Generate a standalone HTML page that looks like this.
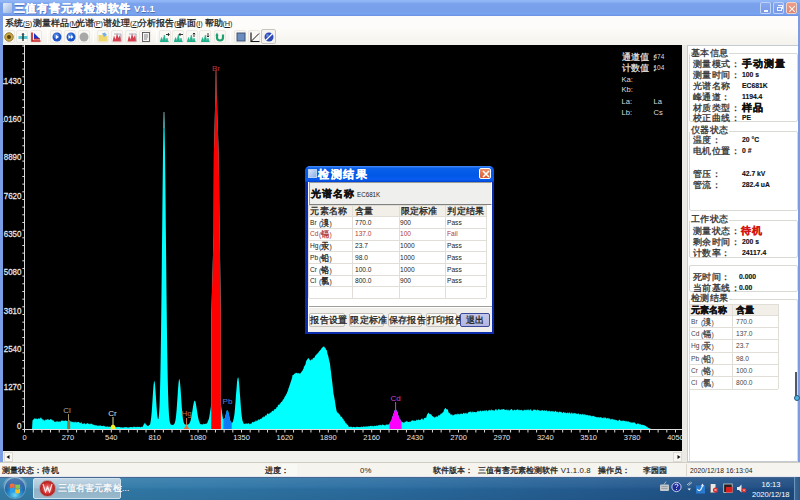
<!DOCTYPE html>
<html><head><meta charset="utf-8">
<style>
*{margin:0;padding:0;box-sizing:border-box}
html,body{width:800px;height:500px;overflow:hidden;background:#7b9de6;font-family:"Liberation Sans",sans-serif;}
.abs{position:absolute}
.nw{white-space:nowrap}
#title{left:0;top:0;width:800px;height:15.5px;background:linear-gradient(#92b8f6 0,#8cb2f4 12%,#7ba2ec 22%,#78a0ea 60%,#78a4f0 88%,#6c90de 100%);}
#title .t{position:absolute;left:13.5px;top:1.5px;color:#fff;font-weight:bold;font-size:11px;letter-spacing:0.75px;white-space:nowrap;line-height:12px;text-shadow:0.5px 0.5px 0.5px rgba(40,60,120,0.5)}
.tb{position:absolute;top:2.2px;width:10.8px;height:11.7px;border:1px solid rgba(214,228,252,0.75);border-radius:2px;background:linear-gradient(#88a8ee,#7898e6)}
#menu{left:2.5px;top:15.5px;width:795.5px;height:12.5px;background:#fdfcfa}
#menu>span{position:absolute;top:2.5px;font-size:8.5px;line-height:10px;color:#222;white-space:nowrap}
#menu i{font-style:normal;font-size:7.4px;color:#222;letter-spacing:-0.2px}
#tool{left:2.5px;top:28px;width:795.5px;height:17px;background:linear-gradient(#fdfcf9,#f4f2ec)}
.ib{position:absolute;top:2px;width:12px;height:12.5px;border:1px solid #ebe9e2;border-radius:2px;background:#f9f8f4}
.ib svg{position:absolute;left:0.5px;top:0.7px}
.sep{position:absolute;top:2px;width:1px;height:13px;background:#d8d5ca;border-right:1px solid #fff}
#chartbg{left:3px;top:45px;width:679px;height:406px;background:#000}
#hscroll{left:3px;top:451px;width:679px;height:11px;background:#f1f1ee}
#split{left:682px;top:45px;width:5px;height:417px;background:#eceae4}
#panel{left:686.5px;top:44.5px;width:111.5px;height:417px;background:#fff;border:1px solid #c6cbd2;border-right:none}
.grp{position:absolute;border:1px solid #d8dad6;border-radius:2px}
.gl{position:absolute;font-size:8.5px;line-height:10px;color:#333;background:#fff;padding:0 1px;white-space:nowrap;letter-spacing:0.3px}
.row{position:absolute;font-size:8.5px;line-height:10px;color:#333;white-space:nowrap;letter-spacing:0.45px}
.val{position:absolute;font-size:7.9px;line-height:10px;color:#111;font-weight:bold;white-space:nowrap;transform:scaleX(.86);transform-origin:0 0;-webkit-text-stroke-width:0.15px}
.valc{position:absolute;font-size:9.5px;line-height:10px;color:#111;font-weight:bold;white-space:nowrap;letter-spacing:1px}
#status{left:0;top:462px;width:800px;height:14px;background:#f6f4ee;border-top:1px solid #cfcdc3}
#status>span{position:absolute;top:2.5px;font-size:7.8px;line-height:9px;color:#222;white-space:nowrap;letter-spacing:0.1px}
#task{left:0;top:476px;width:800px;height:24px;background:linear-gradient(rgba(255,255,255,0.1),rgba(255,255,255,0.03) 45%,rgba(0,0,0,0.04) 55%,rgba(0,0,0,0.08)),linear-gradient(90deg,#3580ac 0,#3078a8 25%,#2a6ca0 50%,#245c92 75%,#1d4a80 100%)}
#dlg{left:305.3px;top:165.8px;width:189.2px;height:168.5px;background:#0c2cae;border-radius:5px 5px 0 0}
#dlg .in{position:absolute;left:2.7px;top:16px;width:184px;height:150px;background:#f0efec;border-left:1px solid #fff}
table.g{border-collapse:collapse;position:absolute;table-layout:fixed}
table.g td{border:1px solid #e2e0d8;font-size:7.6px;line-height:9px;color:#222;white-space:nowrap;padding:0 0 0 1.5px;overflow:hidden;vertical-align:middle}
table.g td b{font-weight:normal;font-size:8.5px;letter-spacing:0.3px}
.btn{position:absolute;height:14px;border:1px solid #c4c2ba;border-radius:2px;background:linear-gradient(#fdfdfb,#efeee9);font-size:8.5px;color:#222;text-align:center;line-height:12px;white-space:nowrap;letter-spacing:0.2px}
.zh{-webkit-text-stroke-width:0.3px}
</style></head><body>
<!-- title bar -->
<div id="title" class="abs">
  <div class="abs" style="left:2.5px;top:2.5px;width:9px;height:10px;background:linear-gradient(135deg,#e8eef8,#9ab4e0);border-radius:1px"></div>
  <div class="t"><span class="zh">三值有害元素检测软件</span><span style="font-size:9.5px;letter-spacing:0.4px"> V1.1</span></div>
  <div class="tb" style="left:760.3px"><div class="abs" style="left:3px;top:7px;width:4px;height:1.5px;background:#f4f7fe"></div></div>
  <div class="tb" style="left:773px"><div class="abs" style="left:2.5px;top:3.5px;width:5px;height:4.5px;border:1px solid #f0f4fe;border-top-width:1.5px"></div><div class="abs" style="left:4px;top:1.8px;width:5px;height:4px;border-top:1.5px solid #f0f4fe;border-right:1px solid #f0f4fe"></div></div>
  <div class="tb" style="left:785.8px;background:linear-gradient(#eba08c,#de8470);border-color:#f6d0c4">
    <svg class="abs" style="left:1px;top:1.5px" width="8" height="8"><path d="M1.2 1.2L6.8 6.8M6.8 1.2L1.2 6.8" stroke="#fff" stroke-width="1.1" opacity="0.9"/></svg>
  </div>
</div>
<div class="abs" style="left:0;top:15px;width:2.5px;height:461px;background:#7b9de6"></div>
<div class="abs" style="left:798px;top:15px;width:2px;height:461px;background:#7b9de6"></div>
<!-- menu -->
<div id="menu" class="abs">
  <span style="left:2.3px"><span class="zh">系统</span><i>(<u>S</u>)</i></span>
  <span style="left:30.7px"><span class="zh">测量样品</span><i>(<u>M</u>)</i></span>
  <span style="left:73px"><span class="zh">光谱</span><i>(<u>P</u>)</i></span>
  <span style="left:100.5px"><span class="zh">谱处理</span><i>(<u>Z</u>)</i></span>
  <span style="left:135.5px"><span class="zh">分析报告</span><i>(<u>B</u>)</i></span>
  <span style="left:175.5px"><span class="zh">界面</span><i>(<u>I</u>)</i></span>
  <span style="left:202px"><span class="zh">帮助</span><i>(<u>H</u>)</i></span>
</div>
<!-- toolbar -->
<div id="tool" class="abs">
  <div class="ib" style="left:0.4px"><svg width="10" height="10"><circle cx="5" cy="5" r="4.3" fill="#c8a848" stroke="#8a6a20" stroke-width="0.8"/><circle cx="5" cy="5" r="2" fill="#5a4010"/></svg></div>
  <div class="ib" style="left:13.7px"><svg width="10" height="10"><path d="M0.5 4h9v3h-9z" fill="#58c8d0"/><path d="M3 2h4l-2 2z" fill="#58c8d0"/><path d="M5 1v8" stroke="#111" stroke-width="1.2"/></svg></div>
  <div class="ib" style="left:27.4px"><svg width="10" height="10"><path d="M1 0.5v8.5h8.5" stroke="#c81818" stroke-width="1.6" fill="none"/><path d="M3 1l6 6h-6z" fill="#1838c8"/><path d="M3 7h6" stroke="#c81818" stroke-width="1.2"/></svg></div>
  <div class="sep" style="left:44px"></div>
  <div class="ib" style="left:47.7px"><svg width="10" height="10"><circle cx="5" cy="5" r="4.5" fill="#1f55c8"/><circle cx="4.3" cy="3.8" r="2.6" fill="#6aa0f0" opacity="0.6"/><path d="M3.8 2.8l3 2.2-3 2.2z" fill="#fff"/></svg></div>
  <div class="ib" style="left:61.5px"><svg width="10" height="10"><circle cx="5" cy="5" r="4.5" fill="#1f55c8"/><circle cx="4.3" cy="3.8" r="2.6" fill="#6aa0f0" opacity="0.6"/><path d="M2.5 3l2.5 2-2.5 2zM5 3l2.5 2-2.5 2z" fill="#fff"/></svg></div>
  <div class="ib" style="left:75px"><svg width="10" height="10"><circle cx="5" cy="5" r="4.5" fill="#a8a8a8"/></svg></div>
  <div class="sep" style="left:90.5px"></div>
  <div class="ib" style="left:94.1px"><svg width="10" height="10"><path d="M0.5 3h4l1 1h4v5.5h-9z" fill="#f0d870"/><path d="M4 1.5l3-1 2 2.5-3 2z" fill="#7ab0e0"/></svg></div>
  <div class="ib" style="left:108.1px"><svg width="10" height="10"><path d="M0.5 9.5l1.5-6 1.5 4 1.5-6.5 1.5 5 1.5-3 1.5 6.5z" fill="#d84050"/><path d="M2 2h7v7" fill="none" stroke="#9a9ab8" stroke-width="0.8"/></svg></div>
  <div class="ib" style="left:122.5px"><svg width="10" height="10"><path d="M0.5 9.5l1.5-6 1.5 4 1.5-6.5 1.5 5 1.5-3 1.5 6.5z" fill="#d84050"/><path d="M2 2h7v7" fill="none" stroke="#9a9ab8" stroke-width="0.8"/></svg></div>
  <div class="ib" style="left:136.6px"><svg width="10" height="10"><rect x="1.5" y="0.5" width="7" height="9" fill="#f4f4f4" stroke="#555" stroke-width="0.9"/><path d="M3 3h4M3 5h4M3 7h3" stroke="#555" stroke-width="0.7"/></svg></div>
  <div class="sep" style="left:153px"></div>
  <div class="ib" style="left:156.3px"><svg width="10" height="10"><path d="M0 10L1.6 5.5 2.8 9 4.3 3 5.8 9 7 6 8.4 10z" fill="#22b08c" stroke="#22b08c" stroke-width="0.6" stroke-linejoin="round"/><path d="M6 2.5h3M8 1l1.3 1.5L8 4" stroke="#222" stroke-width="0.9" fill="none"/></svg></div>
  <div class="ib" style="left:169.9px"><svg width="10" height="10"><path d="M0 10L1.6 5.5 2.8 9 4.3 3 5.8 9 7 6 8.4 10z" fill="#22b08c" stroke="#22b08c" stroke-width="0.6" stroke-linejoin="round"/><path d="M5 2.5h4M6.5 1L5 2.5 6.5 4" stroke="#222" stroke-width="0.9" fill="none"/></svg></div>
  <div class="ib" style="left:183.4px"><svg width="10" height="10"><path d="M0 10L1.6 5.5 2.8 9 4.3 3 5.8 9 7 6 8.4 10z" fill="#22b08c" stroke="#22b08c" stroke-width="0.6" stroke-linejoin="round"/><path d="M7 1v4M5.8 2.2L7 1l1.2 1.2" stroke="#222" stroke-width="0.9" fill="none"/></svg></div>
  <div class="ib" style="left:196.9px"><svg width="10" height="10"><path d="M0 10L1.6 5.5 2.8 9 4.3 3 5.8 9 7 6 8.4 10z" fill="#22b08c" stroke="#22b08c" stroke-width="0.6" stroke-linejoin="round"/><path d="M7 1v4M5.8 3.8L7 5l1.2-1.2" stroke="#222" stroke-width="0.9" fill="none"/></svg></div>
  <div class="ib" style="left:211.4px"><svg width="10" height="10"><path d="M2 2.5v3a3 3 0 0 0 6 0v-3" stroke="#20a070" stroke-width="2.2" fill="none"/><path d="M0.5 3.5l1.5-3 1.5 3z" fill="#20a070"/></svg></div>
  <div class="sep" style="left:227px"></div>
  <div class="ib" style="left:231.5px"><svg width="10" height="10"><rect x="1" y="1" width="8" height="8" fill="#6a8ec0" stroke="#3a4a68" stroke-width="0.9"/></svg></div>
  <div class="ib" style="left:245.5px"><svg width="10" height="10"><path d="M1 0.5v9h8.5" stroke="#1a1a1a" stroke-width="1.2" fill="none"/><path d="M1.5 9L9 1.5" stroke="#1a1a1a" stroke-width="1"/></svg></div>
  <div class="ib" style="left:258.5px;top:1px;width:14.5px;height:14.5px;border-color:#c8c6bc;background:#f4f3ee"><svg style="left:1.7px;top:1.7px" width="10" height="10"><circle cx="5" cy="5" r="4.5" fill="#2a48b8"/><path d="M1.5 8.5L8.5 1.5" stroke="#fff" stroke-width="1.3"/><circle cx="3.5" cy="3.5" r="1.5" fill="#7a9ae8" opacity="0.7"/></svg></div>
</div>
<!-- chart -->
<div id="chartbg" class="abs"></div>
<svg class="abs" style="left:0;top:0" width="800" height="500" viewBox="0 0 800 500">
<defs>
<clipPath id="cb"><rect x="211.3" y="0" width="9.6" height="430"/></clipPath>
<clipPath id="cp"><rect x="223.3" y="0" width="8.4" height="430"/></clipPath>
<clipPath id="cd"><rect x="389.6" y="0" width="12" height="430"/></clipPath>
<clipPath id="chg"><rect x="184" y="0" width="5" height="430"/></clipPath>
<clipPath id="ccr"><rect x="111" y="0" width="4.5" height="430"/></clipPath>
<clipPath id="ccl"><rect x="67.2" y="0" width="3" height="430"/></clipPath>
<clipPath id="chart"><rect x="3" y="45" width="679" height="406"/></clipPath>
</defs>
<g clip-path="url(#chart)">
<polygon points="32.00,429.50 32.00,429.50 32.50,420.32 33.00,420.23 33.50,418.93 34.00,419.57 34.50,418.34 35.00,418.24 35.50,418.88 36.00,418.15 36.50,419.08 37.00,418.45 37.50,419.19 38.00,419.24 38.50,418.55 39.00,417.74 39.50,418.93 40.00,418.66 40.50,417.85 41.00,417.19 41.50,418.36 42.00,419.19 42.50,418.64 43.00,420.82 43.50,419.29 44.00,420.25 44.50,420.45 45.00,420.44 45.50,420.03 46.00,419.06 46.50,420.14 47.00,419.35 47.50,419.19 48.00,419.60 48.50,419.23 49.00,420.04 49.50,419.98 50.00,419.65 50.50,418.74 51.00,419.13 51.50,419.71 52.00,419.60 52.50,420.21 53.00,420.86 53.50,420.35 54.00,420.89 54.50,422.09 55.00,421.87 55.50,421.88 56.00,421.18 56.50,421.37 57.00,422.10 57.50,420.78 58.00,422.26 58.50,421.65 59.00,420.97 59.50,421.98 60.00,421.31 60.50,422.04 61.00,420.84 61.50,420.60 62.00,420.87 62.50,420.32 63.00,421.34 63.50,420.65 64.00,420.83 64.50,420.86 65.00,421.08 65.50,420.39 66.00,420.20 66.50,421.05 67.00,420.70 67.50,421.83 68.00,420.71 68.50,420.85 69.00,420.26 69.50,420.61 70.00,421.61 70.50,421.47 71.00,421.00 71.50,422.23 72.00,421.51 72.50,422.11 73.00,422.27 73.50,422.44 74.00,421.24 74.50,422.46 75.00,422.31 75.50,422.13 76.00,421.33 76.50,422.85 77.00,422.29 77.50,422.21 78.00,421.71 78.50,421.93 79.00,421.94 79.50,423.10 80.00,422.95 80.50,423.15 81.00,422.31 81.50,422.23 82.00,423.74 82.50,423.75 83.00,423.70 83.50,423.76 84.00,423.36 84.50,423.23 85.00,423.87 85.50,424.39 86.00,423.70 86.50,423.84 87.00,423.55 87.50,422.94 88.00,423.45 88.50,423.81 89.00,423.69 89.50,423.65 90.00,424.74 90.50,423.42 91.00,423.70 91.50,423.63 92.00,423.84 92.50,424.54 93.00,424.60 93.50,425.12 94.00,424.40 94.50,425.31 95.00,425.37 95.50,425.23 96.00,425.37 96.50,425.19 97.00,425.65 97.50,425.78 98.00,425.65 98.50,425.78 99.00,425.52 99.50,426.01 100.00,425.05 100.50,425.44 101.00,426.05 101.50,426.00 102.00,425.96 102.50,426.01 103.00,426.33 103.50,425.63 104.00,425.56 104.50,426.18 105.00,426.23 105.50,426.69 106.00,426.73 106.50,426.57 107.00,426.71 107.50,426.24 108.00,426.86 108.50,427.01 109.00,426.24 109.50,426.63 110.00,426.99 110.50,426.68 111.00,427.14 111.50,426.76 112.00,426.43 112.50,426.55 113.00,426.72 113.50,427.09 114.00,427.04 114.50,427.22 115.00,426.80 115.50,427.00 116.00,426.83 116.50,427.18 117.00,427.28 117.50,426.88 118.00,426.77 118.50,426.89 119.00,426.95 119.50,426.96 120.00,427.03 120.50,427.41 121.00,427.23 121.50,427.36 122.00,427.59 122.50,427.61 123.00,427.46 123.50,427.50 124.00,427.24 124.50,427.09 125.00,427.43 125.50,427.10 126.00,427.05 126.50,427.05 127.00,427.41 127.50,427.48 128.00,427.46 128.50,427.46 129.00,427.44 129.50,427.14 130.00,426.92 130.50,426.94 131.00,427.17 131.50,427.03 132.00,426.91 132.50,427.40 133.00,426.96 133.50,426.76 134.00,426.83 134.50,426.83 135.00,427.02 135.50,427.24 136.00,426.78 136.50,427.13 137.00,426.77 137.50,426.65 138.00,427.08 138.50,427.07 139.00,426.66 139.50,426.83 140.00,427.25 140.50,427.28 141.00,427.26 141.50,426.69 142.00,426.72 142.50,427.05 143.00,426.02 143.50,424.94 144.00,424.08 144.50,423.43 145.00,422.54 145.50,423.70 146.00,424.86 146.50,424.52 147.00,425.66 147.50,426.09 148.00,425.72 148.50,426.11 149.00,425.36 149.50,424.81 150.00,424.63 150.50,422.27 151.00,419.11 151.50,414.33 152.00,407.88 152.50,400.18 153.00,392.26 153.50,385.54 154.00,381.49 154.50,381.08 155.00,384.40 155.50,390.63 156.00,398.36 156.50,406.07 157.00,412.55 157.50,417.07 158.00,419.25 158.50,418.71 159.00,414.75 159.50,406.16 160.00,391.21 160.50,368.05 161.00,335.44 161.50,293.72 162.00,245.54 162.50,196.18 163.00,152.83 163.50,122.98 164.00,112.30 164.50,122.93 165.00,152.73 165.50,196.03 166.00,245.34 166.50,293.47 167.00,335.16 167.50,367.75 168.00,390.97 168.50,406.13 169.00,415.24 169.50,420.28 170.00,422.86 170.50,424.09 171.00,424.63 171.50,424.84 172.00,424.91 172.50,424.91 173.00,424.85 173.50,424.68 174.00,424.33 174.50,423.61 175.00,422.26 175.50,419.95 176.00,416.33 176.50,411.17 177.00,404.55 177.50,396.97 178.00,389.43 178.50,383.18 179.00,379.48 179.50,379.12 180.00,382.18 180.50,387.99 181.00,395.37 181.50,403.01 182.00,409.87 182.50,415.32 183.00,419.22 183.50,421.75 184.00,423.25 184.50,424.05 185.00,424.44 185.50,424.62 186.00,424.68 186.50,424.69 187.00,424.66 187.50,424.59 188.00,424.47 188.50,424.24 189.00,423.85 189.50,423.21 190.00,422.22 190.50,420.78 191.00,418.82 191.50,416.31 192.00,413.33 192.50,410.07 193.00,406.81 193.50,403.93 194.00,401.78 194.50,400.69 195.00,400.81 195.50,402.11 196.00,404.41 196.50,407.39 197.00,410.65 197.50,413.86 198.00,416.74 198.50,419.13 199.00,420.96 199.50,422.29 200.00,423.63 200.50,424.05 201.00,424.39 201.50,423.94 202.00,424.51 202.50,424.23 203.00,424.65 203.50,423.31 204.00,424.17 204.50,423.93 205.00,423.64 205.50,423.71 206.00,423.64 206.50,423.57 207.00,423.50 207.50,422.25 208.00,421.00 208.50,419.75 209.00,418.50 209.50,415.46 210.00,412.41 210.50,409.37 211.00,406.33 211.30,404.50 211.31,313.50 211.50,306.86 212.00,289.40 212.50,271.93 213.00,254.46 213.50,236.99 213.60,233.50 213.90,153.50 214.00,149.47 214.50,129.31 215.00,109.16 215.50,89.00 216.00,65.00 216.50,89.00 217.00,103.66 217.50,118.32 218.00,132.98 218.50,147.64 218.70,153.50 219.00,177.50 219.50,217.50 219.70,233.50 220.00,253.50 220.50,286.82 220.90,313.48 220.91,404.48 221.00,405.12 221.50,408.66 222.00,412.15 222.50,415.54 223.00,418.75 223.50,419.10 224.00,419.08 224.50,418.62 225.00,417.75 225.50,415.62 226.00,413.48 226.50,411.72 227.00,409.95 227.50,410.72 228.00,410.69 228.50,413.09 229.00,415.12 229.50,417.29 230.00,420.13 230.50,420.89 231.00,422.40 231.50,423.30 232.00,422.01 232.50,422.82 233.00,421.40 233.50,419.32 234.00,417.02 234.50,413.64 235.00,408.21 235.50,401.94 236.00,394.61 236.50,388.92 237.00,382.16 237.50,378.71 238.00,377.28 238.50,377.89 239.00,382.51 239.50,388.47 240.00,395.15 240.50,401.93 241.00,409.09 241.50,413.95 242.00,418.00 242.50,420.68 243.00,422.09 243.50,423.44 244.00,423.78 244.50,424.08 245.00,423.40 245.50,423.78 246.00,423.44 246.50,423.26 247.00,424.33 247.50,423.76 248.00,423.03 248.50,423.12 249.00,424.28 249.50,424.24 250.00,423.60 250.50,424.08 251.00,423.58 251.50,423.69 252.00,422.43 252.50,422.03 253.00,421.63 253.50,422.78 254.00,421.58 254.50,421.48 255.00,422.22 255.50,420.70 256.00,420.36 256.50,421.51 257.00,420.00 257.50,420.81 258.00,420.45 258.50,419.36 259.00,419.31 259.50,420.15 260.00,419.31 260.50,418.79 261.00,418.74 261.50,418.64 262.00,418.05 262.50,416.96 263.00,417.86 263.50,416.60 264.00,416.50 264.50,416.95 265.00,416.09 265.50,415.25 266.00,415.15 266.50,415.65 267.00,413.69 267.50,413.74 268.00,413.11 268.50,414.36 269.00,413.77 269.50,413.87 270.00,412.23 270.50,412.85 271.00,412.79 271.50,411.96 272.00,410.78 272.50,410.64 273.00,411.34 273.50,411.24 274.00,409.55 274.50,409.62 275.00,408.83 275.50,409.37 276.00,408.87 276.50,407.18 277.00,407.09 277.50,407.17 278.00,405.06 278.50,405.05 279.00,404.19 279.50,404.92 280.00,402.98 280.50,403.84 281.00,401.85 281.50,402.03 282.00,401.68 282.50,400.74 283.00,399.33 283.50,399.52 284.00,398.77 284.50,397.05 285.00,396.57 285.50,395.80 286.00,394.71 286.50,393.91 287.00,392.64 287.50,391.44 288.00,390.45 288.50,388.37 289.00,387.57 289.50,385.55 290.00,384.48 290.50,382.53 291.00,381.47 291.50,379.40 292.00,378.18 292.50,375.24 293.00,374.73 293.50,375.07 294.00,374.26 294.50,373.13 295.00,374.31 295.50,372.73 296.00,373.12 296.50,373.12 297.00,372.62 297.50,373.53 298.00,373.44 298.50,373.23 299.00,372.81 299.50,374.08 300.00,373.31 300.50,373.43 301.00,372.57 301.50,372.00 302.00,371.12 302.50,370.67 303.00,369.55 303.50,368.67 304.00,366.38 304.50,366.12 305.00,365.15 305.50,364.16 306.00,361.66 306.50,360.47 307.00,359.69 307.50,359.26 308.00,358.19 308.50,358.33 309.00,358.60 309.50,359.71 310.00,359.76 310.50,360.66 311.00,359.97 311.50,359.37 312.00,359.55 312.50,359.52 313.00,357.64 313.50,358.24 314.00,357.57 314.50,357.63 315.00,356.33 315.50,355.53 316.00,354.84 316.50,354.75 317.00,353.56 317.50,353.83 318.00,352.72 318.50,352.40 319.00,351.21 319.50,351.22 320.00,350.61 320.50,349.63 321.00,349.38 321.50,348.37 322.00,348.10 322.50,347.32 323.00,347.12 323.50,346.64 324.00,345.97 324.50,347.19 325.00,348.12 325.50,347.75 326.00,350.06 326.50,349.84 327.00,351.08 327.50,354.32 328.00,355.06 328.50,357.13 329.00,359.77 329.50,361.75 330.00,363.77 330.50,368.45 331.00,372.09 331.50,376.46 332.00,380.20 332.50,384.58 333.00,388.88 333.50,393.65 334.00,395.77 334.50,398.83 335.00,401.50 335.50,405.01 336.00,408.05 336.50,410.55 337.00,411.99 337.50,413.04 338.00,412.31 338.50,413.40 339.00,413.87 339.50,414.46 340.00,414.96 340.50,415.89 341.00,417.36 341.50,416.52 342.00,417.20 342.50,418.26 343.00,418.88 343.50,419.33 344.00,421.07 344.50,420.54 345.00,422.09 345.50,423.08 346.00,423.41 346.50,423.26 347.00,424.79 347.50,424.69 348.00,425.14 348.50,426.37 349.00,426.99 349.50,426.92 350.00,426.77 350.50,426.71 351.00,426.83 351.50,426.81 352.00,427.25 352.50,427.20 353.00,427.13 353.50,426.75 354.00,427.10 354.50,426.90 355.00,427.33 355.50,427.29 356.00,427.14 356.50,426.84 357.00,426.83 357.50,426.84 358.00,427.14 358.50,426.97 359.00,427.02 359.50,427.02 360.00,427.29 360.50,426.66 361.00,427.15 361.50,426.50 362.00,426.49 362.50,427.19 363.00,426.79 363.50,426.45 364.00,426.28 364.50,426.68 365.00,426.80 365.50,426.82 366.00,426.12 366.50,426.74 367.00,426.37 367.50,426.73 368.00,426.34 368.50,425.89 369.00,426.63 369.50,425.93 370.00,426.19 370.50,425.76 371.00,425.90 371.50,426.34 372.00,425.59 372.50,425.98 373.00,426.43 373.50,426.41 374.00,425.83 374.50,425.83 375.00,425.95 375.50,426.09 376.00,425.81 376.50,425.80 377.00,425.13 377.50,426.09 378.00,425.14 378.50,424.98 379.00,425.82 379.50,424.76 380.00,424.98 380.50,424.69 381.00,425.43 381.50,425.28 382.00,425.21 382.50,424.34 383.00,424.85 383.50,425.11 384.00,424.97 384.50,425.14 385.00,425.42 385.50,425.30 386.00,424.19 386.50,424.93 387.00,423.91 387.50,424.85 388.00,424.72 388.50,424.18 389.00,424.49 389.50,423.83 390.00,422.29 390.50,421.73 391.00,420.95 391.50,420.13 392.00,418.23 392.50,416.58 393.00,415.54 393.50,413.47 394.00,413.03 394.50,410.43 395.00,409.96 395.50,408.96 396.00,409.24 396.50,410.51 397.00,412.01 397.50,411.84 398.00,414.86 398.50,415.84 399.00,417.59 399.50,419.00 400.00,419.30 400.50,419.72 401.00,421.63 401.50,421.33 402.00,422.23 402.50,421.91 403.00,422.26 403.50,422.67 404.00,422.65 404.50,422.51 405.00,421.19 405.50,421.86 406.00,422.28 406.50,420.97 407.00,420.73 407.50,421.63 408.00,422.12 408.50,421.94 409.00,422.05 409.50,421.52 410.00,421.89 410.50,421.55 411.00,421.43 411.50,420.80 412.00,420.15 412.50,420.32 413.00,420.85 413.50,420.77 414.00,420.49 414.50,420.68 415.00,420.67 415.50,421.09 416.00,420.62 416.50,419.30 417.00,420.74 417.50,419.98 418.00,419.68 418.50,419.18 419.00,420.27 419.50,420.09 420.00,420.05 420.50,419.70 421.00,419.53 421.50,418.53 422.00,418.64 422.50,418.50 423.00,419.92 423.50,419.76 424.00,418.35 424.50,417.76 425.00,418.16 425.50,417.47 426.00,417.90 426.50,416.45 427.00,414.66 427.50,414.02 428.00,413.25 428.50,412.52 429.00,413.59 429.50,413.91 430.00,414.18 430.50,414.08 431.00,414.45 431.50,414.65 432.00,415.63 432.50,416.22 433.00,416.33 433.50,417.09 434.00,417.01 434.50,417.96 435.00,416.60 435.50,417.54 436.00,416.23 436.50,416.43 437.00,416.75 437.50,416.77 438.00,416.24 438.50,415.24 439.00,414.80 439.50,415.52 440.00,415.23 440.50,413.99 441.00,413.40 441.50,413.51 442.00,413.44 442.50,412.26 443.00,412.70 443.50,411.44 444.00,410.37 444.50,408.74 445.00,408.69 445.50,407.87 446.00,408.50 446.50,409.13 447.00,409.59 447.50,409.01 448.00,410.30 448.50,411.88 449.00,413.22 449.50,413.08 450.00,413.36 450.50,414.27 451.00,414.89 451.50,414.39 452.00,414.09 452.50,415.34 453.00,415.66 453.50,415.06 454.00,414.85 454.50,414.31 455.00,415.11 455.50,413.96 456.00,414.00 456.50,414.35 457.00,414.82 457.50,413.37 458.00,414.48 458.50,413.50 459.00,414.48 459.50,414.43 460.00,413.39 460.50,414.15 461.00,412.90 461.50,413.65 462.00,414.13 462.50,414.00 463.00,413.58 463.50,413.06 464.00,412.48 464.50,413.85 465.00,413.33 465.50,413.59 466.00,412.15 466.50,413.57 467.00,413.66 467.50,413.58 468.00,412.91 468.50,411.93 469.00,411.88 469.50,412.08 470.00,411.53 470.50,411.58 471.00,412.59 471.50,412.78 472.00,411.36 472.50,411.63 473.00,412.84 473.50,411.63 474.00,412.08 474.50,412.01 475.00,412.02 475.50,412.24 476.00,412.47 476.50,411.90 477.00,411.70 477.50,410.54 478.00,411.96 478.50,410.38 479.00,411.67 479.50,411.33 480.00,410.42 480.50,410.39 481.00,411.05 481.50,411.71 482.00,410.91 482.50,411.05 483.00,410.03 483.50,411.31 484.00,410.96 484.50,409.97 485.00,411.50 485.50,410.78 486.00,410.02 486.50,410.06 487.00,411.34 487.50,411.31 488.00,411.23 488.50,409.65 489.00,410.81 489.50,409.89 490.00,409.58 490.50,410.55 491.00,410.64 491.50,409.37 492.00,409.95 492.50,410.55 493.00,409.70 493.50,410.39 494.00,410.42 494.50,410.88 495.00,409.49 495.50,409.17 496.00,409.64 496.50,409.05 497.00,410.67 497.50,410.25 498.00,409.78 498.50,408.88 499.00,408.85 499.50,409.84 500.00,410.05 500.50,409.74 501.00,409.63 501.50,408.86 502.00,410.21 502.50,409.11 503.00,409.23 503.50,409.09 504.00,409.19 504.50,409.50 505.00,410.01 505.50,410.03 506.00,409.97 506.50,409.22 507.00,410.50 507.50,410.29 508.00,409.30 508.50,410.22 509.00,410.56 509.50,410.63 510.00,409.71 510.50,410.12 511.00,408.96 511.50,409.14 512.00,408.96 512.50,410.27 513.00,410.61 513.50,410.60 514.00,409.88 514.50,409.51 515.00,410.00 515.50,410.39 516.00,410.07 516.50,409.71 517.00,409.63 517.50,409.50 518.00,409.34 518.50,409.67 519.00,410.66 519.50,409.38 520.00,410.37 520.50,409.88 521.00,410.24 521.50,409.58 522.00,410.56 522.50,410.48 523.00,410.48 523.50,410.65 524.00,409.34 524.50,409.90 525.00,410.36 525.50,410.23 526.00,409.16 526.50,410.04 527.00,410.54 527.50,409.51 528.00,409.79 528.50,409.19 529.00,410.79 529.50,410.13 530.00,409.51 530.50,409.48 531.00,409.35 531.50,410.93 532.00,410.47 532.50,410.79 533.00,410.67 533.50,409.26 534.00,409.97 534.50,409.35 535.00,410.36 535.50,409.47 536.00,410.23 536.50,410.57 537.00,409.65 537.50,409.35 538.00,410.86 538.50,409.99 539.00,409.95 539.50,410.67 540.00,410.41 540.50,410.82 541.00,410.71 541.50,410.62 542.00,410.01 542.50,409.92 543.00,410.73 543.50,411.09 544.00,410.58 544.50,410.00 545.00,410.94 545.50,410.77 546.00,411.02 546.50,410.01 547.00,410.51 547.50,411.44 548.00,411.42 548.50,410.95 549.00,410.73 549.50,410.62 550.00,411.66 550.50,411.59 551.00,410.68 551.50,411.25 552.00,411.54 552.50,411.55 553.00,410.44 553.50,411.65 554.00,411.25 554.50,411.68 555.00,411.63 555.50,410.87 556.00,410.69 556.50,411.89 557.00,412.24 557.50,411.34 558.00,412.34 558.50,412.75 559.00,411.19 559.50,412.11 560.00,411.45 560.50,412.25 561.00,411.45 561.50,412.26 562.00,412.85 562.50,413.17 563.00,412.26 563.50,412.15 564.00,411.71 564.50,413.24 565.00,412.33 565.50,412.83 566.00,412.64 566.50,413.33 567.00,413.14 567.50,412.76 568.00,412.08 568.50,413.60 569.00,412.96 569.50,412.44 570.00,412.20 570.50,413.64 571.00,413.81 571.50,412.39 572.00,412.39 572.50,413.32 573.00,414.14 573.50,412.62 574.00,413.64 574.50,412.76 575.00,413.32 575.50,413.00 576.00,414.25 576.50,413.17 577.00,414.24 577.50,413.96 578.00,413.21 578.50,413.29 579.00,414.51 579.50,414.49 580.00,414.21 580.50,414.05 581.00,414.34 581.50,414.86 582.00,414.69 582.50,413.88 583.00,413.62 583.50,415.21 584.00,414.34 584.50,414.08 585.00,415.46 585.50,414.11 586.00,415.50 586.50,414.72 587.00,414.90 587.50,414.85 588.00,415.52 588.50,415.40 589.00,415.20 589.50,415.57 590.00,415.24 590.50,415.71 591.00,415.81 591.50,416.65 592.00,415.67 592.50,415.99 593.00,416.54 593.50,415.67 594.00,415.73 594.50,416.40 595.00,416.99 595.50,416.55 596.00,417.30 596.50,417.35 597.00,416.90 597.50,417.60 598.00,417.06 598.50,417.02 599.00,417.96 599.50,416.97 600.00,418.06 600.50,416.98 601.00,416.99 601.50,417.55 602.00,418.47 602.50,417.75 603.00,418.06 603.50,417.12 604.00,418.68 604.50,417.47 605.00,417.31 605.50,417.86 606.00,417.78 606.50,418.98 607.00,417.63 607.50,418.59 608.00,417.83 608.50,417.98 609.00,419.41 609.50,418.36 610.00,418.18 610.50,419.81 611.00,419.37 611.50,418.72 612.00,419.87 612.50,418.62 613.00,419.81 613.50,418.91 614.00,420.20 614.50,419.63 615.00,418.95 615.50,420.31 616.00,420.29 616.50,419.93 617.00,420.34 617.50,420.92 618.00,420.73 618.50,420.85 619.00,419.53 619.50,420.07 620.00,419.75 620.50,421.14 621.00,420.10 621.50,421.38 622.00,420.71 622.50,420.60 623.00,421.17 623.50,420.32 624.00,420.97 624.50,421.00 625.00,420.53 625.50,422.01 626.00,420.48 626.50,421.22 627.00,421.74 627.50,421.11 628.00,422.16 628.50,420.95 629.00,421.79 629.50,422.27 630.00,421.64 630.50,422.31 631.00,422.89 631.50,421.96 632.00,423.30 632.50,422.01 633.00,423.12 633.50,422.52 634.00,422.00 634.50,422.81 635.00,422.76 635.50,423.49 636.00,424.14 636.50,424.18 637.00,424.06 637.50,423.32 638.00,423.74 638.50,423.69 639.00,423.13 639.50,424.52 640.00,424.45 640.50,423.84 641.00,424.95 641.50,425.06 642.00,424.60 642.50,425.06 643.00,424.77 643.50,425.16 644.00,424.95 644.50,425.24 645.00,425.98 645.50,425.79 646.00,426.24 646.50,426.83 647.00,426.44 647.50,427.27 648.00,427.59 648.50,427.88 649.00,427.88 649.50,428.23 650.00,428.52 650.50,428.81 651.00,429.10 651.50,429.38 651.70,429.50" fill="#00ffff"/>
<polygon points="210.50,429.50 210.50,409.37 211.00,406.33 211.30,404.50 211.31,313.50 211.50,306.86 212.00,289.40 212.50,271.93 213.00,254.46 213.50,236.99 213.60,233.50 213.90,153.50 214.00,149.47 214.50,129.31 215.00,109.16 215.50,89.00 216.00,65.00 216.50,89.00 217.00,103.66 217.50,118.32 218.00,132.98 218.50,147.64 218.70,153.50 219.00,177.50 219.50,217.50 219.70,233.50 220.00,253.50 220.50,286.82 220.90,313.48 220.91,404.48 221.00,405.12 221.50,408.66 221.50,429.50" fill="#ff0000" clip-path="url(#cb)"/>
<polygon points="222.50,429.50 222.50,415.54 223.00,418.75 223.50,419.10 224.00,419.08 224.50,418.62 225.00,417.75 225.50,415.62 226.00,413.48 226.50,411.72 227.00,409.95 227.50,410.72 228.00,410.69 228.50,413.09 229.00,415.12 229.50,417.29 230.00,420.13 230.50,420.89 231.00,422.40 231.50,423.30 232.00,422.01 232.50,422.82 232.50,429.50" fill="#0a7cf8" clip-path="url(#cp)"/>
<polygon points="389.00,429.50 389.00,424.49 389.50,423.83 390.00,422.29 390.50,421.73 391.00,420.95 391.50,420.13 392.00,418.23 392.50,416.58 393.00,415.54 393.50,413.47 394.00,413.03 394.50,410.43 395.00,409.96 395.50,408.96 396.00,409.24 396.50,410.51 397.00,412.01 397.50,411.84 398.00,414.86 398.50,415.84 399.00,417.59 399.50,419.00 400.00,419.30 400.50,419.72 401.00,421.63 401.50,421.33 402.00,422.23 402.50,421.91 402.50,429.50" fill="#ff00ff" clip-path="url(#cd)"/>
<path d="M183.5 429.5L186.5 424.5L189.5 429.5z" fill="#e8703c"/>
<path d="M110.5 429.5C110.5 425.5 111.5 424.8 113 424.8C114.5 424.8 115.5 425.5 115.5 429.5z" fill="#f4f020"/>
<polygon points="66.50,429.50 66.50,421.05 67.00,420.70 67.50,421.83 68.00,420.71 68.50,420.85 69.00,420.26 69.50,420.61 70.00,421.61 70.50,421.47 71.00,421.00 71.00,429.50" fill="#8a7a40" clip-path="url(#ccl)"/>
<line x1="164" y1="112" x2="164" y2="128" stroke="#8a9a9a" stroke-width="1"/>
<line x1="216" y1="71" x2="216" y2="95" stroke="#a03030" stroke-width="1"/>
<g stroke="#dcdcdc" stroke-width="1">
<line x1="24.5" y1="45" x2="24.5" y2="429.5"/>
<line x1="24.5" y1="429.5" x2="682" y2="429.5"/>
<line x1="22.3" y1="429.50" x2="24.5" y2="429.50"/><line x1="22.3" y1="421.83" x2="24.5" y2="421.83"/><line x1="22.3" y1="414.16" x2="24.5" y2="414.16"/><line x1="22.3" y1="406.50" x2="24.5" y2="406.50"/><line x1="22.3" y1="398.83" x2="24.5" y2="398.83"/><line x1="22.3" y1="391.16" x2="24.5" y2="391.16"/><line x1="22.3" y1="383.49" x2="24.5" y2="383.49"/><line x1="22.3" y1="375.82" x2="24.5" y2="375.82"/><line x1="22.3" y1="368.16" x2="24.5" y2="368.16"/><line x1="22.3" y1="360.49" x2="24.5" y2="360.49"/><line x1="22.3" y1="352.82" x2="24.5" y2="352.82"/><line x1="22.3" y1="345.15" x2="24.5" y2="345.15"/><line x1="22.3" y1="337.48" x2="24.5" y2="337.48"/><line x1="22.3" y1="329.82" x2="24.5" y2="329.82"/><line x1="22.3" y1="322.15" x2="24.5" y2="322.15"/><line x1="22.3" y1="314.48" x2="24.5" y2="314.48"/><line x1="22.3" y1="306.81" x2="24.5" y2="306.81"/><line x1="22.3" y1="299.14" x2="24.5" y2="299.14"/><line x1="22.3" y1="291.48" x2="24.5" y2="291.48"/><line x1="22.3" y1="283.81" x2="24.5" y2="283.81"/><line x1="22.3" y1="276.14" x2="24.5" y2="276.14"/><line x1="22.3" y1="268.47" x2="24.5" y2="268.47"/><line x1="22.3" y1="260.80" x2="24.5" y2="260.80"/><line x1="22.3" y1="253.14" x2="24.5" y2="253.14"/><line x1="22.3" y1="245.47" x2="24.5" y2="245.47"/><line x1="22.3" y1="237.80" x2="24.5" y2="237.80"/><line x1="22.3" y1="230.13" x2="24.5" y2="230.13"/><line x1="22.3" y1="222.46" x2="24.5" y2="222.46"/><line x1="22.3" y1="214.80" x2="24.5" y2="214.80"/><line x1="22.3" y1="207.13" x2="24.5" y2="207.13"/><line x1="22.3" y1="199.46" x2="24.5" y2="199.46"/><line x1="22.3" y1="191.79" x2="24.5" y2="191.79"/><line x1="22.3" y1="184.12" x2="24.5" y2="184.12"/><line x1="22.3" y1="176.46" x2="24.5" y2="176.46"/><line x1="22.3" y1="168.79" x2="24.5" y2="168.79"/><line x1="22.3" y1="161.12" x2="24.5" y2="161.12"/><line x1="22.3" y1="153.45" x2="24.5" y2="153.45"/><line x1="22.3" y1="145.78" x2="24.5" y2="145.78"/><line x1="22.3" y1="138.12" x2="24.5" y2="138.12"/><line x1="22.3" y1="130.45" x2="24.5" y2="130.45"/><line x1="22.3" y1="122.78" x2="24.5" y2="122.78"/><line x1="22.3" y1="115.11" x2="24.5" y2="115.11"/><line x1="22.3" y1="107.44" x2="24.5" y2="107.44"/><line x1="22.3" y1="99.78" x2="24.5" y2="99.78"/><line x1="22.3" y1="92.11" x2="24.5" y2="92.11"/><line x1="22.3" y1="84.44" x2="24.5" y2="84.44"/><line x1="22.3" y1="76.77" x2="24.5" y2="76.77"/><line x1="22.3" y1="69.10" x2="24.5" y2="69.10"/><line x1="22.3" y1="61.44" x2="24.5" y2="61.44"/><line x1="22.3" y1="53.77" x2="24.5" y2="53.77"/><line x1="22.3" y1="46.10" x2="24.5" y2="46.10"/><line x1="24.50" y1="429.5" x2="24.50" y2="432.5"/><line x1="33.18" y1="429.5" x2="33.18" y2="432.5"/><line x1="41.86" y1="429.5" x2="41.86" y2="432.5"/><line x1="50.54" y1="429.5" x2="50.54" y2="432.5"/><line x1="59.22" y1="429.5" x2="59.22" y2="432.5"/><line x1="67.90" y1="429.5" x2="67.90" y2="432.5"/><line x1="76.58" y1="429.5" x2="76.58" y2="432.5"/><line x1="85.26" y1="429.5" x2="85.26" y2="432.5"/><line x1="93.94" y1="429.5" x2="93.94" y2="432.5"/><line x1="102.62" y1="429.5" x2="102.62" y2="432.5"/><line x1="111.30" y1="429.5" x2="111.30" y2="432.5"/><line x1="119.98" y1="429.5" x2="119.98" y2="432.5"/><line x1="128.66" y1="429.5" x2="128.66" y2="432.5"/><line x1="137.34" y1="429.5" x2="137.34" y2="432.5"/><line x1="146.02" y1="429.5" x2="146.02" y2="432.5"/><line x1="154.70" y1="429.5" x2="154.70" y2="432.5"/><line x1="163.38" y1="429.5" x2="163.38" y2="432.5"/><line x1="172.06" y1="429.5" x2="172.06" y2="432.5"/><line x1="180.74" y1="429.5" x2="180.74" y2="432.5"/><line x1="189.42" y1="429.5" x2="189.42" y2="432.5"/><line x1="198.10" y1="429.5" x2="198.10" y2="432.5"/><line x1="206.78" y1="429.5" x2="206.78" y2="432.5"/><line x1="215.46" y1="429.5" x2="215.46" y2="432.5"/><line x1="224.14" y1="429.5" x2="224.14" y2="432.5"/><line x1="232.82" y1="429.5" x2="232.82" y2="432.5"/><line x1="241.50" y1="429.5" x2="241.50" y2="432.5"/><line x1="250.18" y1="429.5" x2="250.18" y2="432.5"/><line x1="258.86" y1="429.5" x2="258.86" y2="432.5"/><line x1="267.54" y1="429.5" x2="267.54" y2="432.5"/><line x1="276.22" y1="429.5" x2="276.22" y2="432.5"/><line x1="284.90" y1="429.5" x2="284.90" y2="432.5"/><line x1="293.58" y1="429.5" x2="293.58" y2="432.5"/><line x1="302.26" y1="429.5" x2="302.26" y2="432.5"/><line x1="310.94" y1="429.5" x2="310.94" y2="432.5"/><line x1="319.62" y1="429.5" x2="319.62" y2="432.5"/><line x1="328.30" y1="429.5" x2="328.30" y2="432.5"/><line x1="336.98" y1="429.5" x2="336.98" y2="432.5"/><line x1="345.66" y1="429.5" x2="345.66" y2="432.5"/><line x1="354.34" y1="429.5" x2="354.34" y2="432.5"/><line x1="363.02" y1="429.5" x2="363.02" y2="432.5"/><line x1="371.70" y1="429.5" x2="371.70" y2="432.5"/><line x1="380.38" y1="429.5" x2="380.38" y2="432.5"/><line x1="389.06" y1="429.5" x2="389.06" y2="432.5"/><line x1="397.74" y1="429.5" x2="397.74" y2="432.5"/><line x1="406.42" y1="429.5" x2="406.42" y2="432.5"/><line x1="415.10" y1="429.5" x2="415.10" y2="432.5"/><line x1="423.78" y1="429.5" x2="423.78" y2="432.5"/><line x1="432.46" y1="429.5" x2="432.46" y2="432.5"/><line x1="441.14" y1="429.5" x2="441.14" y2="432.5"/><line x1="449.82" y1="429.5" x2="449.82" y2="432.5"/><line x1="458.50" y1="429.5" x2="458.50" y2="432.5"/><line x1="467.18" y1="429.5" x2="467.18" y2="432.5"/><line x1="475.86" y1="429.5" x2="475.86" y2="432.5"/><line x1="484.54" y1="429.5" x2="484.54" y2="432.5"/><line x1="493.22" y1="429.5" x2="493.22" y2="432.5"/><line x1="501.90" y1="429.5" x2="501.90" y2="432.5"/><line x1="510.58" y1="429.5" x2="510.58" y2="432.5"/><line x1="519.26" y1="429.5" x2="519.26" y2="432.5"/><line x1="527.94" y1="429.5" x2="527.94" y2="432.5"/><line x1="536.62" y1="429.5" x2="536.62" y2="432.5"/><line x1="545.30" y1="429.5" x2="545.30" y2="432.5"/><line x1="553.98" y1="429.5" x2="553.98" y2="432.5"/><line x1="562.66" y1="429.5" x2="562.66" y2="432.5"/><line x1="571.34" y1="429.5" x2="571.34" y2="432.5"/><line x1="580.02" y1="429.5" x2="580.02" y2="432.5"/><line x1="588.70" y1="429.5" x2="588.70" y2="432.5"/><line x1="597.38" y1="429.5" x2="597.38" y2="432.5"/><line x1="606.06" y1="429.5" x2="606.06" y2="432.5"/><line x1="614.74" y1="429.5" x2="614.74" y2="432.5"/><line x1="623.42" y1="429.5" x2="623.42" y2="432.5"/><line x1="632.10" y1="429.5" x2="632.10" y2="432.5"/><line x1="640.78" y1="429.5" x2="640.78" y2="432.5"/><line x1="649.46" y1="429.5" x2="649.46" y2="432.5"/><line x1="658.14" y1="429.5" x2="658.14" y2="432.5"/><line x1="666.82" y1="429.5" x2="666.82" y2="432.5"/><line x1="675.50" y1="429.5" x2="675.50" y2="432.5"/>
</g>
<g fill="#e6e6e6" font-family="Liberation Sans, sans-serif" font-size="7.5">
<text x="0" y="0" text-anchor="end" font-size="8.6" stroke="#e8e8e8" stroke-width="0.25" transform="translate(21.4 428.60) scale(0.92 1)">0</text><text x="0" y="0" text-anchor="end" font-size="8.6" stroke="#e8e8e8" stroke-width="0.25" transform="translate(21.4 390.26) scale(0.92 1)">1270</text><text x="0" y="0" text-anchor="end" font-size="8.6" stroke="#e8e8e8" stroke-width="0.25" transform="translate(21.4 351.92) scale(0.92 1)">2540</text><text x="0" y="0" text-anchor="end" font-size="8.6" stroke="#e8e8e8" stroke-width="0.25" transform="translate(21.4 313.58) scale(0.92 1)">3810</text><text x="0" y="0" text-anchor="end" font-size="8.6" stroke="#e8e8e8" stroke-width="0.25" transform="translate(21.4 275.24) scale(0.92 1)">5080</text><text x="0" y="0" text-anchor="end" font-size="8.6" stroke="#e8e8e8" stroke-width="0.25" transform="translate(21.4 236.90) scale(0.92 1)">6350</text><text x="0" y="0" text-anchor="end" font-size="8.6" stroke="#e8e8e8" stroke-width="0.25" transform="translate(21.4 198.56) scale(0.92 1)">7620</text><text x="0" y="0" text-anchor="end" font-size="8.6" stroke="#e8e8e8" stroke-width="0.25" transform="translate(21.4 160.22) scale(0.92 1)">8890</text><text x="0" y="0" text-anchor="end" font-size="8.6" stroke="#e8e8e8" stroke-width="0.25" transform="translate(21.4 121.88) scale(0.92 1)">10160</text><text x="0" y="0" text-anchor="end" font-size="8.6" stroke="#e8e8e8" stroke-width="0.25" transform="translate(21.4 83.54) scale(0.92 1)">11430</text>
<text x="24.5" y="440" text-anchor="middle">0</text><text x="67.9" y="440" text-anchor="middle">270</text><text x="111.3" y="440" text-anchor="middle">540</text><text x="154.7" y="440" text-anchor="middle">810</text><text x="198.1" y="440" text-anchor="middle">1080</text><text x="241.5" y="440" text-anchor="middle">1350</text><text x="284.9" y="440" text-anchor="middle">1620</text><text x="328.3" y="440" text-anchor="middle">1890</text><text x="371.7" y="440" text-anchor="middle">2160</text><text x="415.1" y="440" text-anchor="middle">2430</text><text x="458.5" y="440" text-anchor="middle">2700</text><text x="501.9" y="440" text-anchor="middle">2970</text><text x="545.3" y="440" text-anchor="middle">3240</text><text x="588.7" y="440" text-anchor="middle">3510</text><text x="632.1" y="440" text-anchor="middle">3780</text><text x="675.5" y="440" text-anchor="middle">4050</text>
</g>
<g font-family="Liberation Sans, sans-serif" font-size="8" text-anchor="middle">
<text x="216" y="70.5" fill="#c03030">Br</text>
<text x="67" y="412.5" fill="#a8a8a8">Cl</text>
<line x1="68.5" y1="414" x2="68.5" y2="421" stroke="#a09060"/>
<text x="112.5" y="415.5" fill="#e0e0e0">Cr</text>
<line x1="113" y1="417" x2="113" y2="425" stroke="#e0e0a0"/>
<text x="186.5" y="416" fill="#c8704a">Hg</text>
<line x1="186.5" y1="418" x2="186.5" y2="425" stroke="#c8704a"/>
<text x="227.5" y="404" fill="#4a80e0">Pb</text>
<text x="395.6" y="400.5" fill="#d040d0">Cd</text>
<line x1="395.6" y1="402" x2="395.6" y2="409" stroke="#d040d0"/>
</g>
<g fill="#dedede" font-family="Liberation Sans, sans-serif" font-size="7.6">
<text x="621.5" y="59.5" font-size="8.5" letter-spacing="0.4" stroke="#dedede" stroke-width="0.3">通道值：</text><text x="653.5" y="59.5" transform="translate(653.5 0) scale(0.85 1) translate(-653.5 0)">474</text>
<text x="621.5" y="70.5" font-size="8.5" letter-spacing="0.4" stroke="#dedede" stroke-width="0.3">计数值：</text><text x="653.5" y="70.5" transform="translate(653.5 0) scale(0.85 1) translate(-653.5 0)">104</text>
<text x="621.5" y="81.5">Ka:</text>
<text x="621.5" y="92">Kb:</text>
<text x="621.5" y="104">La:</text><text x="653.5" y="104">La</text>
<text x="621.5" y="115">Lb:</text><text x="653.5" y="115">Cs</text>
</g>
</g>
</svg>
<!-- horizontal scroll -->
<div id="hscroll" class="abs">
  <div class="abs" style="left:0.5px;top:0.5px;width:9px;height:10px;background:#f8f7f3;border:1px solid #dedcd2"><svg class="abs" style="left:1.5px;top:2.5px" width="4" height="4"><path d="M3.5 0v4L0.5 2z" fill="#111"/></svg></div>
  <div class="abs" style="left:670px;top:0.5px;width:9px;height:10px;background:#f8f7f3;border:1px solid #dedcd2"><svg class="abs" style="left:2.5px;top:2.5px" width="4" height="4"><path d="M0.5 0v4L3.5 2z" fill="#111"/></svg></div>
</div>
<div id="split" class="abs"></div>
<!-- right panel -->
<div id="panel" class="abs">
  <div class="grp" style="left:1.5px;top:7px;width:108.5px;height:69.5px"></div>
  <div class="gl" style="left:2.5px;top:2px"><span class="zh">基本信息</span></div>
  <div class="row" style="left:5.5px;top:13.5px"><span class="zh">测量模式：</span></div><div class="valc" style="left:54.5px;top:13.5px"><span class="zh">手动测量</span></div>
  <div class="row" style="left:5.5px;top:24.5px"><span class="zh">测量时间：</span></div><div class="val" style="left:54.5px;top:24.5px">100 s</div>
  <div class="row" style="left:5.5px;top:35.5px"><span class="zh">光谱名称</span></div><div class="val" style="left:54.5px;top:35.5px">EC681K</div>
  <div class="row" style="left:5.5px;top:46.5px"><span class="zh">峰通道：</span></div><div class="val" style="left:54.5px;top:46.5px">1194.4</div>
  <div class="row" style="left:5.5px;top:57.5px"><span class="zh">材质类型：</span></div><div class="valc" style="left:54.5px;top:57.5px"><span class="zh">样品</span></div>
  <div class="row" style="left:5.5px;top:67.5px"><span class="zh">校正曲线：</span></div><div class="val" style="left:54.5px;top:67.5px">PE</div>

  <div class="grp" style="left:1.5px;top:85px;width:108.5px;height:80.5px"></div>
  <div class="gl" style="left:2.5px;top:79.5px"><span class="zh">仪器状态</span></div>
  <div class="row" style="left:5.5px;top:89.5px"><span class="zh">温度：</span></div><div class="val" style="left:54.5px;top:89.5px">20 °C</div>
  <div class="row" style="left:5.5px;top:100.5px"><span class="zh">电机位置：</span></div><div class="val" style="left:54.5px;top:100.5px">0 #</div>
  <div class="row" style="left:5.5px;top:123.5px"><span class="zh">管压：</span></div><div class="val" style="left:54.5px;top:123.5px">42.7 kV</div>
  <div class="row" style="left:5.5px;top:134.5px"><span class="zh">管流：</span></div><div class="val" style="left:54.5px;top:134.5px">282.4 uA</div>

  <div class="grp" style="left:1.5px;top:174px;width:108.5px;height:38.5px"></div>
  <div class="gl" style="left:2.5px;top:168.5px"><span class="zh">工作状态</span></div>
  <div class="row" style="left:5.5px;top:180px"><span class="zh">测量状态：</span></div><div class="valc" style="left:53.5px;top:180px;color:#d41414"><span class="zh">待机</span></div>
  <div class="row" style="left:5.5px;top:191px"><span class="zh">剩余时间：</span></div><div class="val" style="left:54.5px;top:191px">200 s</div>
  <div class="row" style="left:5.5px;top:202.5px"><span class="zh">计数率：</span></div><div class="val" style="left:54.5px;top:202.5px">24117.4</div>

  <div class="grp" style="left:1.5px;top:219px;width:108.5px;height:27px"></div>
  <div class="row" style="left:5.5px;top:226px"><span class="zh">死时间：</span></div><div class="val" style="left:51.5px;top:226px">0.000</div>
  <div class="row" style="left:5.5px;top:237px"><span class="zh">当前基线：</span></div><div class="val" style="left:51.5px;top:237px">0.00</div>

  <div class="grp" style="left:1.5px;top:253px;width:108.5px;height:200px;border-bottom:none"></div>
  <div class="gl" style="left:2.5px;top:247.5px"><span class="zh">检测结果</span></div>
  
</div>
<!-- volume slider artifact at right edge -->
<div class="abs" style="left:795px;top:372px;width:2px;height:26px;background:#505a66"></div>
<div class="abs" style="left:793.5px;top:394.5px;width:6.5px;height:6.5px;border-radius:50%;background:#4cb4e4;border:1px solid #2a5a80"></div>
<!-- status bar -->
<div id="status" class="abs">
  <span style="left:2px"><span class="zh">测量状态：待机</span></span>
  <div class="abs" style="left:282px;top:1px;width:15px;height:12px;background:#f8f8f4"></div>
  <span style="left:265px"><span class="zh">进度：</span></span>
  <span style="left:360px">0%</span>
  <span style="left:432.5px"><span class="zh">软件版本：</span></span>
  <span style="left:477.5px"><span class="zh">三值有害元素检测软件</span> V1.1.0.8</span>
  <span style="left:598px"><span class="zh">操作员：</span></span>
  <span style="left:642.5px"><span class="zh">李园园</span></span>
  <span style="left:690px;transform:scaleX(0.85);transform-origin:0 0">2020/12/18 16:13:04</span>
  <div class="abs" style="left:686px;top:1px;width:1px;height:12px;background:#dad8ce"></div>
</div>
<!-- taskbar -->
<div id="task" class="abs">
  <div class="abs" style="left:0;top:0;width:800px;height:0.6px;background:#e4e6f4"></div><div class="abs" style="left:0;top:0.6px;width:800px;height:1px;background:#46688e"></div>
  <div class="abs" style="left:4.6px;top:1.8px;width:20px;height:20px;border-radius:50%;background:radial-gradient(circle at 50% 85%,#6ad8f8 0,#2a90d0 30%,#1a58a0 60%,#1c4c88 100%);box-shadow:0 0 0 1px rgba(160,200,230,0.45)"></div>
  <svg class="abs" style="left:8.5px;top:6px" width="13" height="12"><path d="M1 2.2c1.5-.8 3-.8 4.6 0v4c-1.6-.8-3.1-.8-4.6 0z" fill="#f25a28"/><path d="M6.4 2.2c1.5.8 3 .8 4.6 0v4c-1.6.8-3.1.8-4.6 0z" fill="#7cc234"/><path d="M1 6.8c1.5-.8 3-.8 4.6 0v4c-1.6-.8-3.1-.8-4.6 0z" fill="#2aa0ea"/><path d="M6.4 6.8c1.5.8 3 .8 4.6 0v4c-1.6.8-3.1.8-4.6 0z" fill="#fcc024"/></svg>
  <div class="abs" style="left:3px;top:1px;width:24px;height:12px;border-radius:12px 12px 4px 4px;background:linear-gradient(rgba(255,255,255,0.28),rgba(255,255,255,0.05))"></div>
  <div class="abs" style="left:33px;top:1.5px;width:88.2px;height:21px;border:1px solid #d0e2ee;border-radius:2px;background:linear-gradient(#c2d6e4,#a6c2d6 45%,#92b2c8 55%,#98b8cc)"></div>
  <div class="abs" style="left:38.8px;top:3.5px;width:17px;height:17px;border-radius:50%;background:radial-gradient(#f4d0d0 0,#e86060 25%,#c82828 55%,#8a1a1a 85%);border:1px solid #b89090"></div>
  <svg class="abs" style="left:42px;top:7px" width="11" height="10"><path d="M1 1l2.5 8 2-5 2 5L10 1" stroke="#fff" stroke-width="1.2" fill="none" opacity="0.85"/></svg>
  <div class="abs nw" style="left:57.5px;top:7px;font-size:8.5px;line-height:10px;color:#fff;letter-spacing:0.2px;text-shadow:0 0 1px #5a7a90"><span class="zh">三值有害元素检</span>...</div>
  <svg class="abs" style="left:655px;top:4px" width="100" height="18">
  <g transform="translate(-655 -4)">
  <rect x="660" y="8.5" width="9" height="6.5" rx="1" fill="#c4c8cc"/><path d="M661.5 10.5h6M661.5 12.5h6" stroke="#8a9096" stroke-width="0.7"/><path d="M664 8.5l2-3" stroke="#c4c8cc" stroke-width="0.8"/>
  <circle cx="676.5" cy="11" r="4.6" fill="#1c2c9c" stroke="#d8def0" stroke-width="0.9"/><path d="M675 9.3c0-1.6 3-1.6 3 0 0 1-1.5 1.2-1.5 2.3M676.5 13v.8" stroke="#fff" stroke-width="1" fill="none"/>
  <path d="M687 9l3.5-3M688.5 9.5l3.5-3" stroke="#c8d0dc" stroke-width="0.9"/><path d="M687.5 12.5h3.5l-1.75 2z" fill="#e8eef4"/>
  <rect x="696" y="9.5" width="9" height="8" fill="#2a7ad0"/><path d="M697.5 13c1 2.5 3 2.5 5-3M701.5 10l1-1.5 1 1.7" stroke="#e8f4ff" stroke-width="1.1" fill="none"/>
  <rect x="710.5" y="8" width="5" height="8.5" fill="#e8e8e8"/><path d="M710.5 8v9" stroke="#777" stroke-width="0.8"/><circle cx="715.5" cy="14" r="2.6" fill="#d82828"/><path d="M714.3 12.8l2.4 2.4M716.7 12.8l-2.4 2.4" stroke="#fff" stroke-width="0.6"/>
  <rect x="723.7" y="8" width="8.5" height="8.5" fill="#2a2020" stroke="#d0d0d0" stroke-width="0.8"/><rect x="726" y="11" width="6.5" height="5.5" fill="#d82020"/>
  <path d="M737 11h2l2.5-2.5v8L739 14h-2z" fill="#e8e8e8"/><circle cx="744" cy="14.3" r="2.4" fill="#d82828"/><path d="M743 13.3l2 2M745 13.3l-2 2" stroke="#fff" stroke-width="0.6"/>
  </g>
</svg>
  <div class="abs nw" style="left:761.5px;top:4px;font-size:7.6px;line-height:9px;color:#fff">16:13</div>
  <div class="abs nw" style="left:752px;top:13.5px;font-size:7.6px;line-height:9px;color:#fff;letter-spacing:-0.05px">2020/12/18</div>
  <div class="abs" style="left:794px;top:1px;width:6px;height:23px;background:linear-gradient(90deg,#3a6690,#2c5886);border-left:1px solid #6a94bc"></div>
</div>
<!-- dialog -->
<div id="dlg" class="abs">
  <div class="abs" style="left:0;top:0;width:188.5px;height:16px;border-radius:5px 5px 0 0;background:linear-gradient(#4a8cf8 0,#0a60ea 14%,#0058e6 60%,#0a5cf0 86%,#0044d4 100%)"></div>
  <div class="abs" style="left:2.5px;top:3px;width:9px;height:9px;background:linear-gradient(135deg,#d8e4f8,#8ab0e8);border:1px solid #b8cff4"></div>
  <div class="abs nw" style="left:13px;top:2px;color:#fff;font-weight:bold;font-size:11px;line-height:12px;letter-spacing:1.6px"><span class="zh">检测结果</span></div>
  <div class="abs" style="left:174px;top:2px;width:12px;height:11.5px;border:1px solid #fff;border-radius:2px;background:linear-gradient(#f0906a,#d8582e)"><svg class="abs" style="left:1.5px;top:1.3px" width="8" height="8"><path d="M1 1L7 7M7 1L1 7" stroke="#fff" stroke-width="1.6"/></svg></div>
  <div class="in">
    <div class="abs" style="left:0;top:0.5px;width:183px;height:23px;border:1px solid #9a9a96;border-right-color:#fff;border-bottom-color:#808080;background:#efefed"></div>
    <div class="abs nw" style="left:2.5px;top:6.5px;font-size:9.5px;line-height:11px;font-weight:bold;color:#111;letter-spacing:0.75px"><span class="zh">光谱名称</span></div>
    <div class="abs nw" style="left:48px;top:8px;font-size:7.8px;line-height:9px;color:#222;transform:scaleX(0.8);transform-origin:0 0">EC681K</div>
    
    
    <div class="abs" style="left:0;top:124.5px;width:183px;height:2px;border-top:1px solid #a0a09a;border-bottom:1px solid #fff"></div>
    <div class="btn" style="left:0.5px;top:131px;width:36px"><span class="zh">报告设置</span></div>
    <div class="btn" style="left:40.5px;top:131px;width:35px"><span class="zh">限定标准</span></div>
    <div class="btn" style="left:79px;top:131px;width:34.5px"><span class="zh">保存报告</span></div>
    <div class="btn" style="left:117px;top:131px;width:31px"><span class="zh">打印报告</span></div>
    <div class="btn" style="left:151px;top:131px;width:30.5px;background:linear-gradient(#c4c8ea,#b0b6e0);border-color:#3a4a98"><span class="zh">退出</span></div>
  </div>
</div>
<!-- tables --><div class="abs" style="left:308.5px;top:205.4px;width:183px;height:101px;background:#fff"></div><div class="abs" style="left:308.60px;top:205.40px;width:177.80px;height:92.60px;background:#fff"></div><div class="abs" style="left:308.60px;top:205.40px;width:177.80px;height:11.20px;background:#f1efe7"></div><div class="abs" style="left:308.60px;top:204.90px;width:177.80px;height:1px;background:#e0ded6"></div><div class="abs" style="left:308.60px;top:216.10px;width:177.80px;height:1px;background:#e0ded6"></div><div class="abs" style="left:308.60px;top:227.80px;width:177.80px;height:1px;background:#e0ded6"></div><div class="abs" style="left:308.60px;top:239.50px;width:177.80px;height:1px;background:#e0ded6"></div><div class="abs" style="left:308.60px;top:251.20px;width:177.80px;height:1px;background:#e0ded6"></div><div class="abs" style="left:308.60px;top:262.90px;width:177.80px;height:1px;background:#e0ded6"></div><div class="abs" style="left:308.60px;top:274.50px;width:177.80px;height:1px;background:#e0ded6"></div><div class="abs" style="left:308.60px;top:286.30px;width:177.80px;height:1px;background:#e0ded6"></div><div class="abs" style="left:308.60px;top:297.50px;width:177.80px;height:1px;background:#e0ded6"></div><div class="abs" style="left:308.10px;top:205.40px;width:1px;height:92.60px;background:#e0ded6"></div><div class="abs" style="left:352.10px;top:205.40px;width:1px;height:92.60px;background:#e0ded6"></div><div class="abs" style="left:398.70px;top:205.40px;width:1px;height:92.60px;background:#e0ded6"></div><div class="abs" style="left:444.70px;top:205.40px;width:1px;height:92.60px;background:#e0ded6"></div><div class="abs" style="left:485.90px;top:205.40px;width:1px;height:92.60px;background:#e0ded6"></div><div class="abs nw" style="left:310.40px;top:206.30px;font-size:8.5px;line-height:10px;color:#222;letter-spacing:0.3px;transform:scaleX(1);transform-origin:0 0"><span style="font-size:8.5px;letter-spacing:0.3px"><span class="zh">元素名称</span></span></div><div class="abs nw" style="left:354.80px;top:206.30px;font-size:8.5px;line-height:10px;color:#222;letter-spacing:0.3px;transform:scaleX(1);transform-origin:0 0"><span style="font-size:8.5px;letter-spacing:0.3px"><span class="zh">含量</span></span></div><div class="abs nw" style="left:400.60px;top:206.30px;font-size:8.5px;line-height:10px;color:#222;letter-spacing:0.3px;transform:scaleX(1);transform-origin:0 0"><span style="font-size:8.5px;letter-spacing:0.3px"><span class="zh">限定标准</span></span></div><div class="abs nw" style="left:447.30px;top:206.30px;font-size:8.5px;line-height:10px;color:#222;letter-spacing:0.3px;transform:scaleX(1);transform-origin:0 0"><span style="font-size:8.5px;letter-spacing:0.3px"><span class="zh">判定结果</span></span></div><div class="abs nw" style="left:310.20px;top:217.75px;font-size:7.6px;line-height:10px;color:#222;transform:scaleX(0.87);transform-origin:0 0">Br</div><div class="abs nw" style="left:319.30px;top:217.75px;font-size:7.6px;line-height:10px;color:#222;transform:scaleX(0.9);transform-origin:0 0">(<span style="font-size:8.5px"><span class="zh">溴</span></span>)</div><div class="abs nw" style="left:354.50px;top:217.75px;font-size:7.6px;line-height:10px;color:#222;transform:scaleX(0.87);transform-origin:0 0">770.0</div><div class="abs nw" style="left:400.20px;top:217.75px;font-size:7.6px;line-height:10px;color:#222;transform:scaleX(0.87);transform-origin:0 0">900</div><div class="abs nw" style="left:447.00px;top:217.75px;font-size:7.6px;line-height:10px;color:#222;transform:scaleX(0.87);transform-origin:0 0">Pass</div><div class="abs nw" style="left:310.20px;top:229.45px;font-size:7.6px;line-height:10px;color:#b23a3a;transform:scaleX(0.87);transform-origin:0 0">Cd</div><div class="abs nw" style="left:319.30px;top:229.45px;font-size:7.6px;line-height:10px;color:#b23a3a;transform:scaleX(0.9);transform-origin:0 0">(<span style="font-size:8.5px"><span class="zh">镉</span></span>)</div><div class="abs nw" style="left:354.50px;top:229.45px;font-size:7.6px;line-height:10px;color:#b23a3a;transform:scaleX(0.87);transform-origin:0 0">137.0</div><div class="abs nw" style="left:400.20px;top:229.45px;font-size:7.6px;line-height:10px;color:#b23a3a;transform:scaleX(0.87);transform-origin:0 0">100</div><div class="abs nw" style="left:447.00px;top:229.45px;font-size:7.6px;line-height:10px;color:#b23a3a;transform:scaleX(0.87);transform-origin:0 0">Fail</div><div class="abs nw" style="left:310.20px;top:241.15px;font-size:7.6px;line-height:10px;color:#222;transform:scaleX(0.87);transform-origin:0 0">Hg</div><div class="abs nw" style="left:319.30px;top:241.15px;font-size:7.6px;line-height:10px;color:#222;transform:scaleX(0.9);transform-origin:0 0">(<span style="font-size:8.5px"><span class="zh">汞</span></span>)</div><div class="abs nw" style="left:354.50px;top:241.15px;font-size:7.6px;line-height:10px;color:#222;transform:scaleX(0.87);transform-origin:0 0">23.7</div><div class="abs nw" style="left:400.20px;top:241.15px;font-size:7.6px;line-height:10px;color:#222;transform:scaleX(0.87);transform-origin:0 0">1000</div><div class="abs nw" style="left:447.00px;top:241.15px;font-size:7.6px;line-height:10px;color:#222;transform:scaleX(0.87);transform-origin:0 0">Pass</div><div class="abs nw" style="left:310.20px;top:252.85px;font-size:7.6px;line-height:10px;color:#222;transform:scaleX(0.87);transform-origin:0 0">Pb</div><div class="abs nw" style="left:319.30px;top:252.85px;font-size:7.6px;line-height:10px;color:#222;transform:scaleX(0.9);transform-origin:0 0">(<span style="font-size:8.5px"><span class="zh">铅</span></span>)</div><div class="abs nw" style="left:354.50px;top:252.85px;font-size:7.6px;line-height:10px;color:#222;transform:scaleX(0.87);transform-origin:0 0">98.0</div><div class="abs nw" style="left:400.20px;top:252.85px;font-size:7.6px;line-height:10px;color:#222;transform:scaleX(0.87);transform-origin:0 0">1000</div><div class="abs nw" style="left:447.00px;top:252.85px;font-size:7.6px;line-height:10px;color:#222;transform:scaleX(0.87);transform-origin:0 0">Pass</div><div class="abs nw" style="left:310.20px;top:264.50px;font-size:7.6px;line-height:10px;color:#222;transform:scaleX(0.87);transform-origin:0 0">Cr</div><div class="abs nw" style="left:319.30px;top:264.50px;font-size:7.6px;line-height:10px;color:#222;transform:scaleX(0.9);transform-origin:0 0">(<span style="font-size:8.5px"><span class="zh">铬</span></span>)</div><div class="abs nw" style="left:354.50px;top:264.50px;font-size:7.6px;line-height:10px;color:#222;transform:scaleX(0.87);transform-origin:0 0">100.0</div><div class="abs nw" style="left:400.20px;top:264.50px;font-size:7.6px;line-height:10px;color:#222;transform:scaleX(0.87);transform-origin:0 0">1000</div><div class="abs nw" style="left:447.00px;top:264.50px;font-size:7.6px;line-height:10px;color:#222;transform:scaleX(0.87);transform-origin:0 0">Pass</div><div class="abs nw" style="left:310.20px;top:276.20px;font-size:7.6px;line-height:10px;color:#222;transform:scaleX(0.87);transform-origin:0 0">Cl</div><div class="abs nw" style="left:319.30px;top:276.20px;font-size:7.6px;line-height:10px;color:#222;transform:scaleX(0.9);transform-origin:0 0">(<span style="font-size:8.5px"><span class="zh">氯</span></span>)</div><div class="abs nw" style="left:354.50px;top:276.20px;font-size:7.6px;line-height:10px;color:#222;transform:scaleX(0.87);transform-origin:0 0">800.0</div><div class="abs nw" style="left:400.20px;top:276.20px;font-size:7.6px;line-height:10px;color:#222;transform:scaleX(0.87);transform-origin:0 0">900</div><div class="abs nw" style="left:447.00px;top:276.20px;font-size:7.6px;line-height:10px;color:#222;transform:scaleX(0.87);transform-origin:0 0">Pass</div><div class="abs" style="left:308.5px;top:306.3px;width:183.5px;height:1px;background:#a09e98"></div><div class="abs" style="left:308.5px;top:307.3px;width:183.5px;height:1px;background:#fff"></div><div class="abs" style="left:689.00px;top:304.00px;width:89.00px;height:85.10px;background:#fff"></div><div class="abs" style="left:689.00px;top:304.00px;width:89.00px;height:11.30px;background:#f1efe7"></div><div class="abs" style="left:689.00px;top:303.50px;width:89.00px;height:1px;background:#e0ded6"></div><div class="abs" style="left:689.00px;top:314.80px;width:89.00px;height:1px;background:#e0ded6"></div><div class="abs" style="left:689.00px;top:327.10px;width:89.00px;height:1px;background:#e0ded6"></div><div class="abs" style="left:689.00px;top:339.40px;width:89.00px;height:1px;background:#e0ded6"></div><div class="abs" style="left:689.00px;top:351.70px;width:89.00px;height:1px;background:#e0ded6"></div><div class="abs" style="left:689.00px;top:364.00px;width:89.00px;height:1px;background:#e0ded6"></div><div class="abs" style="left:689.00px;top:376.30px;width:89.00px;height:1px;background:#e0ded6"></div><div class="abs" style="left:689.00px;top:388.60px;width:89.00px;height:1px;background:#e0ded6"></div><div class="abs" style="left:688.50px;top:304.00px;width:1px;height:85.10px;background:#e0ded6"></div><div class="abs" style="left:732.30px;top:304.00px;width:1px;height:85.10px;background:#e0ded6"></div><div class="abs" style="left:777.50px;top:304.00px;width:1px;height:85.10px;background:#e0ded6"></div><div class="abs nw" style="left:690.90px;top:304.80px;font-size:7.6px;line-height:10px;color:#111;font-weight:bold;transform:scaleX(1);transform-origin:0 0"><span style="font-size:9.4px;letter-spacing:0.2px"><span class="zh">元素名称</span></span></div><div class="abs nw" style="left:735.90px;top:304.80px;font-size:7.6px;line-height:10px;color:#111;font-weight:bold;transform:scaleX(1);transform-origin:0 0"><span style="font-size:9.4px;letter-spacing:0.2px"><span class="zh">含量</span></span></div><div class="abs nw" style="left:691.00px;top:316.75px;font-size:7.6px;line-height:10px;color:#444;transform:scaleX(0.87);transform-origin:0 0">Br</div><div class="abs nw" style="left:700.60px;top:316.75px;font-size:7.6px;line-height:10px;color:#444;transform:scaleX(0.9);transform-origin:0 0">(<span style="font-size:8.5px"><span class="zh">溴</span></span>)</div><div class="abs nw" style="left:735.80px;top:316.75px;font-size:7.6px;line-height:10px;color:#444;transform:scaleX(0.87);transform-origin:0 0">770.0</div><div class="abs nw" style="left:691.00px;top:329.05px;font-size:7.6px;line-height:10px;color:#444;transform:scaleX(0.87);transform-origin:0 0">Cd</div><div class="abs nw" style="left:700.60px;top:329.05px;font-size:7.6px;line-height:10px;color:#444;transform:scaleX(0.9);transform-origin:0 0">(<span style="font-size:8.5px"><span class="zh">镉</span></span>)</div><div class="abs nw" style="left:735.80px;top:329.05px;font-size:7.6px;line-height:10px;color:#444;transform:scaleX(0.87);transform-origin:0 0">137.0</div><div class="abs nw" style="left:691.00px;top:341.35px;font-size:7.6px;line-height:10px;color:#444;transform:scaleX(0.87);transform-origin:0 0">Hg</div><div class="abs nw" style="left:700.60px;top:341.35px;font-size:7.6px;line-height:10px;color:#444;transform:scaleX(0.9);transform-origin:0 0">(<span style="font-size:8.5px"><span class="zh">汞</span></span>)</div><div class="abs nw" style="left:735.80px;top:341.35px;font-size:7.6px;line-height:10px;color:#444;transform:scaleX(0.87);transform-origin:0 0">23.7</div><div class="abs nw" style="left:691.00px;top:353.65px;font-size:7.6px;line-height:10px;color:#444;transform:scaleX(0.87);transform-origin:0 0">Pb</div><div class="abs nw" style="left:700.60px;top:353.65px;font-size:7.6px;line-height:10px;color:#444;transform:scaleX(0.9);transform-origin:0 0">(<span style="font-size:8.5px"><span class="zh">铅</span></span>)</div><div class="abs nw" style="left:735.80px;top:353.65px;font-size:7.6px;line-height:10px;color:#444;transform:scaleX(0.87);transform-origin:0 0">98.0</div><div class="abs nw" style="left:691.00px;top:365.95px;font-size:7.6px;line-height:10px;color:#444;transform:scaleX(0.87);transform-origin:0 0">Cr</div><div class="abs nw" style="left:700.60px;top:365.95px;font-size:7.6px;line-height:10px;color:#444;transform:scaleX(0.9);transform-origin:0 0">(<span style="font-size:8.5px"><span class="zh">铬</span></span>)</div><div class="abs nw" style="left:735.80px;top:365.95px;font-size:7.6px;line-height:10px;color:#444;transform:scaleX(0.87);transform-origin:0 0">100.0</div><div class="abs nw" style="left:691.00px;top:378.25px;font-size:7.6px;line-height:10px;color:#444;transform:scaleX(0.87);transform-origin:0 0">Cl</div><div class="abs nw" style="left:700.60px;top:378.25px;font-size:7.6px;line-height:10px;color:#444;transform:scaleX(0.9);transform-origin:0 0">(<span style="font-size:8.5px"><span class="zh">氯</span></span>)</div><div class="abs nw" style="left:735.80px;top:378.25px;font-size:7.6px;line-height:10px;color:#444;transform:scaleX(0.87);transform-origin:0 0">800.0</div></body></html>
